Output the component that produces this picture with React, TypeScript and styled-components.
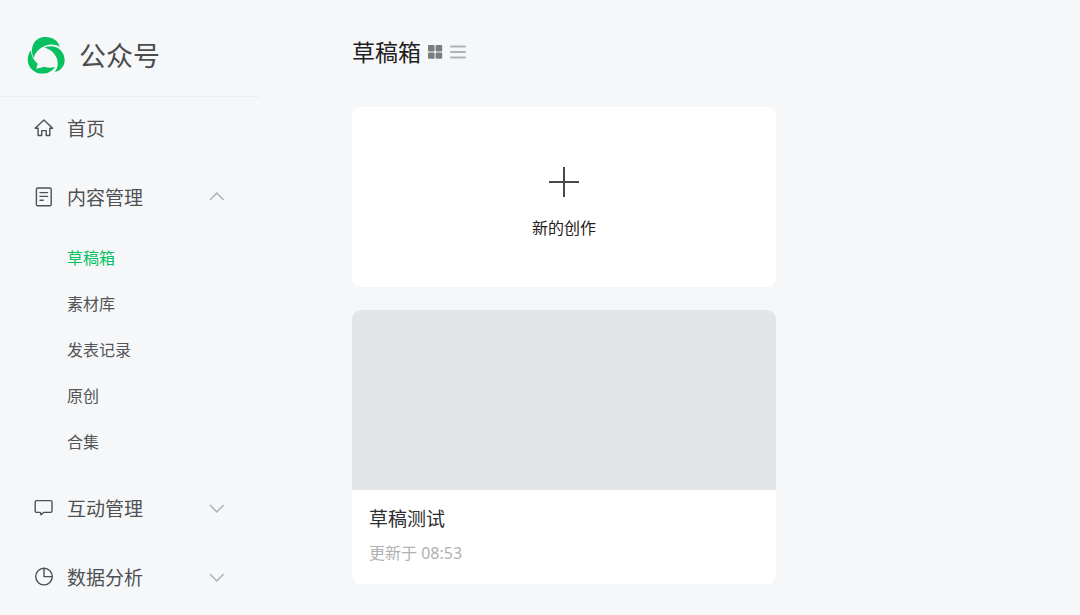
import React from 'react';
import styled, { createGlobalStyle } from 'styled-components';

const GlobalStyle = createGlobalStyle`
  *, *::before, *::after { box-sizing: border-box; }
  body {
    margin: 0;
    background: #f5f7f9;
    color: #1f2022;
    font-family: "Noto Sans", "Noto Sans CJK SC", sans-serif;
    font-size: 16px;
  }
  button { font: inherit; color: inherit; border: 0; padding: 0; background: none; cursor: pointer; }
  a { color: inherit; text-decoration: none; }
  ul { list-style: none; margin: 0; padding: 0; }
  h1, h2, p { margin: 0; font-weight: 400; }
  svg { display: block; flex: none; }
`;

const Layout = styled.div`
  display: flex;
  min-height: 100vh;
`;

const Sidebar = styled.aside`
  flex: none;
  width: 260px;
`;

const Brand = styled.a`
  display: flex;
  align-items: center;
  gap: 13px;
  height: 97px;
  padding: 16px 26px 0;
  border-bottom: 1px solid #eceef0;
  color: #4b4c4e;
  font-size: 27px;
  line-height: 40px;
`;

const NavList = styled.ul`
  display: flex;
  flex-direction: column;
  gap: 7px;
`;

const rowStyles = `
  display: flex;
  align-items: center;
  gap: 13px;
  width: 100%;
  height: 62px;
  padding: 0 34px;
  color: #4f5052;
  font-size: 19px;
  line-height: 28px;
`;

const NavLink = styled.a`
  ${rowStyles}
`;

const NavToggle = styled.button`
  &&& { ${rowStyles} }
`;

const NavLabel = styled.span`
  flex: 1;
  padding-top: 2px;
  text-align: left;
`;

const SubList = styled.ul`
  padding: 6px 0 6px 67px;
`;

const SubLink = styled.a<{ $active?: boolean }>`
  display: flex;
  align-items: center;
  height: 46px;
  color: ${({ $active }) => ($active ? '#07c160' : '#545557')};
`;

const Main = styled.main`
  flex: 1;
  min-width: 0;
  padding: 34px 92px 31px;
`;

const PageHeader = styled.header`
  display: flex;
  align-items: center;
  gap: 7px;
  margin-bottom: 37px;
`;

const PageTitle = styled.h1`
  font-size: 23px;
  line-height: 36px;
`;

const ViewButton = styled.button`
  &&& { color: ${({ 'aria-pressed': on }) => (on ? '#7b7c7e' : '#b2b3b5')}; }
`;

const Cards = styled.div`
  display: grid;
  grid-template-columns: repeat(auto-fill, 424px);
  gap: 23px;
`;

const CreateCard = styled.button`
  &&& {
    display: flex;
    flex-direction: column;
    align-items: center;
    justify-content: center;
    gap: 18px;
    height: 180px;
    padding-top: 14px;
    border-radius: 9px;
    background: #fff;
    line-height: 26px;
  }
`;

const DraftCard = styled.article`
  overflow: hidden;
  border-radius: 9px;
  background: #fff;
`;

const Cover = styled.div`
  height: 180px;
  background: #e3e4e5;
`;

const DraftInfo = styled.div`
  padding: 15px 17px 18px;
`;

const DraftTitle = styled.h2`
  font-size: 19px;
  line-height: 28px;
  color: #2c2d2f;
`;

const Updated = styled.p`
  margin-top: 7px;
  line-height: 26px;
  color: #b0b1b3;
`;

const Logo = () => (
  <svg width="40" height="40" viewBox="0 0 120 120" fill="#07c160" aria-hidden="true">
    <path d="M23 66C9 34 26 3 58 3C80 3 97 15 101 32C88 24 72 24 58 29C40 36 27 49 23 66Z" />
    <path d="M15 43C-2 64 3 98 32 110C54 117 77 110 87 92C76 96 66 96 56 92L31 98L35 83C22 72 15 58 15 43Z" />
    <path d="M54 35C86 22 117 42 116 75C115 92 102 106 86 108C98 94 98 76 89 60C82 46 68 37 54 35Z" />
  </svg>
);

const iconProps = {
  width: 20,
  height: 20,
  viewBox: '0 0 20 20',
  fill: 'none',
  stroke: 'currentColor',
  strokeWidth: 1.4,
  strokeLinejoin: 'round' as const,
  strokeLinecap: 'round' as const,
  'aria-hidden': true,
};

const HomeIcon = () => (
  <svg {...iconProps}>
    <path d="M1.2 10.2L9.9 2L18.6 10.2H15.8V17.5H12.2V12.6H7.7V17.5H4.1V10.2Z" />
  </svg>
);

const DocIcon = () => (
  <svg {...iconProps}>
    <rect x="2.4" y="1" width="14.8" height="17.8" rx="1.4" />
    <path d="M6 5.6H13.6M6 9.4H13.6M6 13.2H9.2" />
  </svg>
);

const ChatIcon = () => (
  <svg {...iconProps}>
    <path d="M2.6 2.6H16.6Q18 2.6 18 4V13Q18 14.4 16.6 14.4H9.6L7 16.8L6.2 14.4H2.6Q1.2 14.4 1.2 13V4Q1.2 2.6 2.6 2.6Z" />
  </svg>
);

const ChartIcon = () => (
  <svg {...iconProps}>
    <circle cx="10" cy="9.6" r="8.3" />
    <path d="M10 1.4V9.6H18.2" />
  </svg>
);

const Chevron = ({ up = false }: { up?: boolean }) => (
  <svg width="18" height="18" viewBox="0 0 18 18" fill="none" stroke="#b0b1b3" strokeWidth="1.5" aria-hidden="true">
    <path d={up ? 'M2 12L8.8 5L15.6 12' : 'M2 6L8.8 13L15.6 6'} />
  </svg>
);

const GridIcon = () => (
  <svg width="15" height="16" viewBox="0 0 15 16" fill="currentColor" aria-hidden="true">
    <rect x="0" y="1" width="6.6" height="6.4" rx="1" />
    <rect x="7.6" y="1" width="6.6" height="6.4" rx="1" />
    <rect x="0" y="8.4" width="6.6" height="6.4" rx="1" />
    <rect x="7.6" y="8.4" width="6.6" height="6.4" rx="1" />
  </svg>
);

const ListIcon = () => (
  <svg width="16" height="16" viewBox="0 0 16 16" fill="currentColor" aria-hidden="true">
    <rect y="1.6" width="16" height="2" rx="1" />
    <rect y="7" width="16" height="2" rx="1" />
    <rect y="12.4" width="16" height="2" rx="1" />
  </svg>
);

const PlusIcon = () => (
  <svg width="30" height="30" viewBox="0 0 30 30" stroke="#48494b" strokeWidth="2" aria-hidden="true">
    <path d="M15 0V30M0 15H30" />
  </svg>
);

const contentPages = ['草稿箱', '素材库', '发表记录', '原创', '合集'];

export default function App() {
  return (
    <>
      <GlobalStyle />
      <Layout>
        <Sidebar>
          <Brand href="#">
            <Logo />
            <span>公众号</span>
          </Brand>
          <nav>
            <NavList>
              <li>
                <NavLink href="#">
                  <HomeIcon />
                  <NavLabel>首页</NavLabel>
                </NavLink>
              </li>
              <li>
                <NavToggle type="button" aria-expanded="true">
                  <DocIcon />
                  <NavLabel>内容管理</NavLabel>
                  <Chevron up />
                </NavToggle>
                <SubList>
                  {contentPages.map((page, index) => (
                    <li key={page}>
                      <SubLink href="#" $active={index === 0}>
                        {page}
                      </SubLink>
                    </li>
                  ))}
                </SubList>
              </li>
              <li>
                <NavToggle type="button" aria-expanded="false">
                  <ChatIcon />
                  <NavLabel>互动管理</NavLabel>
                  <Chevron />
                </NavToggle>
              </li>
              <li>
                <NavToggle type="button" aria-expanded="false">
                  <ChartIcon />
                  <NavLabel>数据分析</NavLabel>
                  <Chevron />
                </NavToggle>
              </li>
            </NavList>
          </nav>
        </Sidebar>
        <Main>
          <PageHeader>
            <PageTitle>草稿箱</PageTitle>
            <ViewButton type="button" aria-label="卡片视图" aria-pressed={true}>
              <GridIcon />
            </ViewButton>
            <ViewButton type="button" aria-label="列表视图" aria-pressed={false}>
              <ListIcon />
            </ViewButton>
          </PageHeader>
          <Cards>
            <CreateCard type="button">
              <PlusIcon />
              <span>新的创作</span>
            </CreateCard>
            <DraftCard>
              <Cover />
              <DraftInfo>
                <DraftTitle>草稿测试</DraftTitle>
                <Updated>更新于 08:53</Updated>
              </DraftInfo>
            </DraftCard>
          </Cards>
        </Main>
      </Layout>
    </>
  );
}
